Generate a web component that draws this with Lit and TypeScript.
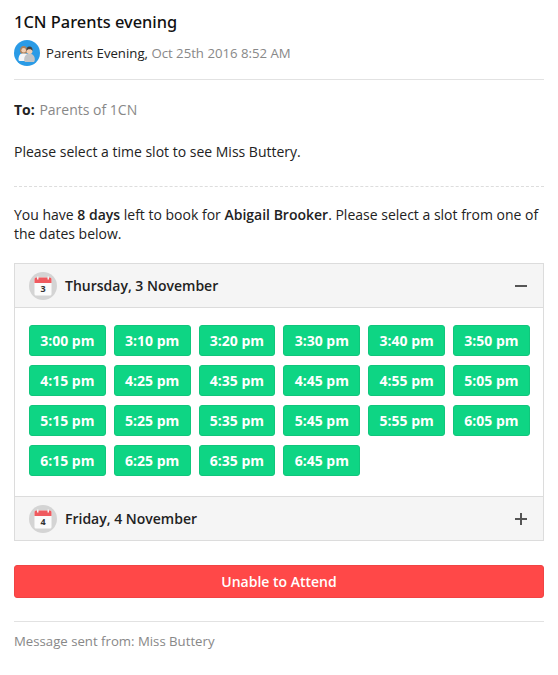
import { LitElement, html, css, svg } from "lit";
import { customElement } from "lit/decorators.js";

const rows = [
  ["3:00 pm", "3:10 pm", "3:20 pm", "3:30 pm", "3:40 pm", "3:50 pm"],
  ["4:15 pm", "4:25 pm", "4:35 pm", "4:45 pm", "4:55 pm", "5:05 pm"],
  ["5:15 pm", "5:25 pm", "5:35 pm", "5:45 pm", "5:55 pm", "6:05 pm"],
  ["6:15 pm", "6:25 pm", "6:35 pm", "6:45 pm"],
];

const cal = (d: string) => html`<svg class="cal" width="28" height="28" viewBox="0 0 28 28">
  <circle cx="14" cy="14" r="14" fill="#d4d4d4"></circle>
  <rect x="5.500" y="5.500" width="17" height="18" rx="1.500" fill="#fbfbfb"></rect>
  <path d="M5.500 11V7A1.500 1.500 0 0 1 7 5.500h14A1.500 1.500 0 0 1 22.500 7V11z" fill="#ef5a5f"></path>
  <rect x="8" y="4.500" width="1.500" height="3" fill="#f3f3f3"></rect>
  <rect x="18.500" y="4.500" width="1.500" height="3" fill="#f3f3f3"></rect>
  <text x="14" y="20" text-anchor="middle" class="caltext">${d}</text>
</svg>`;

const parents = svg`<svg width="26" height="26" viewBox="0 0 26 26">
  <circle cx="13" cy="13" r="13" fill="#2a9be6"></circle>
  <path d="M4.500 19.500c0-3.800 1.800-6.500 5-6.500s4.500 1.500 5 3.500l-1 4.500H6.500C5.200 21 4.500 20.500 4.500 19.500z" fill="#f4f6f8"></path>
  <path d="M6 12c-.3-3.500 1-6 3.700-6s4 2.500 3.700 6l-1.200 1.500H7.200z" fill="#a9825f"></path>
  <circle cx="9.700" cy="10.200" r="2.300" fill="#f1cdb0"></circle>
  <path d="M11 22c-.6-.5-.8-1.500-.8-2.800 0-3.200 2.300-5.700 5.300-5.700s5.300 2.500 5.300 5.700c0 1.300-.3 2.300-.8 2.800z" fill="#c2c4c6"></path>
  <circle cx="15.500" cy="11" r="3" fill="#f1cdb0"></circle>
  <path d="M12.400 11.200c-.4-2.800 1-4.700 3.100-4.700s3.500 1.900 3.100 4.700c-.6-1.500-1.600-2-3.100-2s-2.500.5-3.100 2z" fill="#43413f"></path>
</svg>`;

@customElement("app-root")
export class AppRoot extends LitElement {
  static styles = css`
    :host {
      display: block;
      box-sizing: border-box;
      width: 558px;
      height: 675px;
      padding: 0 14px;
      background: #fff;
      color: #222;
      font-family: "Open Sans", sans-serif;
      font-size: 14px;
      line-height: 19px;
    }
    * { box-sizing: border-box; }
    h1 {
      margin: 0;
      padding-top: 11px;
      height: 40px;
      font-family: "Noto Sans", sans-serif;
      font-size: 16.400px;
      line-height: 22px;
      font-weight: 500;
      color: #111;
    }
    .meta {
      display: flex;
      align-items: center;
      gap: 6px;
      height: 26px;
      font-size: 13.200px;
    }
    .meta svg { flex: none; }
    .grey { color: #888; }
    .rule { border: 0; border-top: 1px solid #e2e2e2; margin: 0; }
    .rule.top { margin-top: 13px; }
    .to { margin: 20px 0 0; }
    .to b { margin-right: 1px; }
    .ask { margin: 23px 0 0; }
    .dash { border: 0; border-top: 1px dashed #ddd; margin: 25px 0 0; }
    .intro { margin: 18px 0 0; }
    b { font-weight: 600; }
    .to b { font-weight: 700; }
    .acc {
      margin-top: 20px;
      border: 1px solid #dcdcdc;
    }
    .head {
      display: flex;
      align-items: center;
      height: 43px;
      padding: 0 16px 0 14px;
      background: #f5f5f5;
      font-weight: 600;
      color: #222;
    }
    .head.first { border-bottom: 1px solid #dcdcdc; height: 44px; }
    .cal { flex: none; margin-right: 8px; }
    .caltext {
      font-family: "Open Sans", sans-serif;
      font-size: 9px;
      font-weight: 700;
      fill: #333;
    }
    .label { flex: 1; }
    .toggle { flex: none; display: block; }
    .slots {
      display: grid;
      grid-template-columns: repeat(6, 1fr);
      gap: 9px 8px;
      padding: 17px 13.100px 20px 13.900px;
      border-bottom: 1px solid #dcdcdc;
    }
    .slot {
      height: 31px;
      display: flex;
      align-items: center;
      justify-content: center;
      background: #0ed584;
      border: 1px solid #10c67c;
      border-radius: 3px;
      color: #fff;
      font-weight: 700;
      font-size: 14px;
    }
    .unable {
      display: flex;
      align-items: center;
      justify-content: center;
      margin-top: 24px;
      height: 33px;
      background: #ff4848;
      border: 1px solid #f04444;
      border-radius: 3px;
      color: #fff;
      font-weight: 600;
      font-size: 14px;
    }
    .rule.bottom { margin-top: 23px; }
    .sent { margin: 10px 0 0; color: #888; font-size: 13.200px; }
  `;

  render() {
    return html`
      <h1>1CN Parents evening</h1>
      <div class="meta">
        ${parents}
        <span>Parents Evening, <span class="grey">Oct 25th 2016 8:52 AM</span></span>
      </div>
      <hr class="rule top" />
      <p class="to"><b>To:</b> <span class="grey">Parents of 1CN</span></p>
      <p class="ask">Please select a time slot to see Miss Buttery.</p>
      <hr class="dash" />
      <p class="intro">You have <b>8 days</b> left to book for <b>Abigail Brooker</b>. Please select a slot from one of the dates below.</p>
      <div class="acc">
        <div class="head first">
          ${cal("3")}
          <span class="label">Thursday, 3 November</span>
          <svg class="toggle" width="12" height="12" viewBox="0 0 12 12"><rect y="5" width="12" height="2" fill="#555"></rect></svg>
        </div>
        <div class="slots">
          ${rows.flat().map((t) => html`<div class="slot">${t}</div>`)}
        </div>
        <div class="head">
          ${cal("4")}
          <span class="label">Friday, 4 November</span>
          <svg class="toggle" width="12" height="12" viewBox="0 0 12 12"><path d="M5 0h2v5h5v2H7v5H5V7H0V5h5z" fill="#555"></path></svg>
        </div>
      </div>
      <div class="unable">Unable to Attend</div>
      <hr class="rule bottom" />
      <p class="sent">Message sent from: Miss Buttery</p>
    `;
  }
}
